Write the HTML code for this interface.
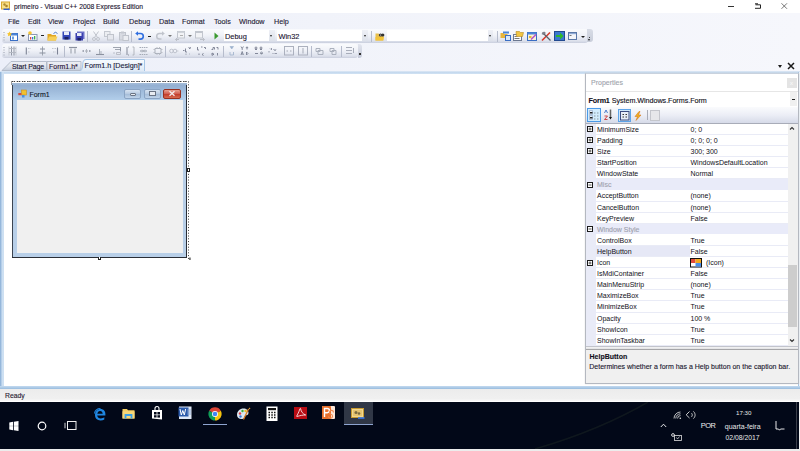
<!DOCTYPE html>
<html><head><meta charset="utf-8">
<style>
*{margin:0;padding:0;box-sizing:border-box}
html,body{width:800px;height:451px;overflow:hidden;background:#fff}
body{position:relative;font-family:"Liberation Sans",sans-serif;font-size:7px;color:#1e1a34}
.a{position:absolute}
.t{position:absolute;white-space:pre;line-height:1;-webkit-text-stroke:.12px currentColor}
.tb{position:absolute;border-radius:3px;background:linear-gradient(#fafbfd 0%,#f0f2f8 45%,#dde1ec 85%,#c9cedd 100%)}
.sep{position:absolute;width:1px;background:#b6bccc}
.dd{position:absolute;width:0;height:0;border-left:2px solid transparent;border-right:2px solid transparent;border-top:2px solid #222}
svg{position:absolute;overflow:visible}
.g{-webkit-text-stroke:0 !important}
.pr{position:absolute;left:596px;width:192px;height:11px;border-bottom:1px solid #eceef8}
</style></head><body>
<!-- title bar -->
<svg style="left:0;top:0" width="12" height="12" viewBox="0 0 12 12">
 <rect x="1.5" y="2" width="8" height="7" fill="#f8e08a" stroke="#d6a830" stroke-width="1"/>
 <circle cx="4.5" cy="4.5" r="1.2" fill="#b08a30"/><circle cx="6.5" cy="6" r="1.3" fill="#a88430"/>
 <path d="M3.5 9.3H9" stroke="#2a5ad0" stroke-width="1.3"/><path d="M8.5 8l1.5 1.3-1.5 1.3z" fill="#3a6ae0"/>
</svg>
<div class="t" style="left:14px;top:4.2px;font-size:6.75px;color:#1c1430">primeiro - Visual C++ 2008 Express Edition</div>
<div class="a" style="left:728px;top:6px;width:6px;height:1px;background:#333"></div>
<svg style="left:0;top:0" width="800" height="12"><path d="M755 3.8h3M755.5 4.8h5v3.5M755 8.3h5.5" fill="none" stroke="#222" stroke-width="1"/><path d="M781.5 3.3l5.5 5.5M787 3.3l-5.5 5.5" stroke="#555" stroke-width=".8"/></svg>


<!-- chrome background -->
<div class="a" style="left:0;top:12.5px;width:800px;height:58.5px;background:linear-gradient(90deg,#eceff9,#f1f3fa 40%,#f6f7fc)"></div>

<!-- menu -->
<div class="t" style="left:8px;top:18.2px;font-size:7.2px">File</div>
<div class="t" style="left:28px;top:18.2px;font-size:7.2px">Edit</div>
<div class="t" style="left:48px;top:18.2px;font-size:7.2px">View</div>
<div class="t" style="left:73px;top:18.2px;font-size:7.2px">Project</div>
<div class="t" style="left:103px;top:18.2px;font-size:7.2px">Build</div>
<div class="t" style="left:129px;top:18.2px;font-size:7.2px">Debug</div>
<div class="t" style="left:159px;top:18.2px;font-size:7.2px">Data</div>
<div class="t" style="left:182px;top:18.2px;font-size:7.2px">Format</div>
<div class="t" style="left:214px;top:18.2px;font-size:7.2px">Tools</div>
<div class="t" style="left:239px;top:18.2px;font-size:7.2px">Window</div>
<div class="t" style="left:274px;top:18.2px;font-size:7.2px">Help</div>

<!-- toolbar 1 -->
<div class="tb" style="left:2px;top:28.5px;width:586px;height:14px"></div>
<div class="a" style="left:586.5px;top:28.5px;width:6px;height:13.5px;border-radius:0 3px 3px 0;background:linear-gradient(#d8dce6,#c8cdd9)"></div>
<div class="a" style="left:588.8px;top:37.3px;width:1.6px;height:1px;background:#444"></div>
<div class="dd" style="left:588px;top:39px;border-width:2px 1.6px 0"></div>
<svg style="left:3px;top:31px" width="3" height="10"><path d="M1 1v1M1 3.5v1M1 6v1M1 8.5v1" stroke="#9aa0b0" stroke-width="1"/></svg>
<!-- new project -->
<svg style="left:7px;top:30.5px" width="11" height="10" viewBox="0 0 11 10">
 <rect x="3.5" y="2.5" width="7" height="7" fill="#fff" stroke="#3a6ec4"/>
 <rect x="3.5" y="2.5" width="7" height="2" fill="#4b84d8"/>
 <rect x="5" y="5.5" width="2" height="3" fill="#6b9ee0"/>
 <path d="M2.5 0.5l.8 1.6 1.7.3-1.2 1.2.3 1.7-1.6-.8-1.6.8.3-1.7-1.2-1.2 1.7-.3z" fill="#f5c431"/>
</svg>
<div class="dd" style="left:21px;top:35px"></div>
<!-- add item -->
<svg style="left:27px;top:30.5px" width="11" height="10" viewBox="0 0 11 10">
 <rect x="1.5" y="3.5" width="8.5" height="6" fill="#fdfdfd" stroke="#8a98b4"/>
 <rect x="3" y="6" width="1.3" height="2.5" fill="#e04848"/><rect x="5" y="6" width="1.3" height="2.5" fill="#3a78d8"/><rect x="7" y="5" width="1.3" height="3.5" fill="#3cb04a"/>
 <circle cx="3" cy="2" r="1.8" fill="#f5c431"/>
</svg>
<div class="a" style="left:40.5px;top:35px;width:3px;height:1px;background:#222"></div>
<!-- open -->
<svg style="left:47px;top:30.5px" width="11" height="10" viewBox="0 0 11 10">
 <path d="M0.5 3h3.5l1 1h4v5.5h-8.5z" fill="#e0a623"/>
 <path d="M2 5.5h8.5l-1.5 4h-8.5z" fill="#f7cf57"/>
 <path d="M6.5 2.5q2-2.5 4 0" fill="none" stroke="#3a6ec4" stroke-width=".9"/>
</svg>
<!-- save -->
<svg style="left:61.5px;top:31px" width="9" height="9" viewBox="0 0 9 9">
 <rect x="0.5" y="0.5" width="8" height="8" fill="#3447b8"/>
 <rect x="2" y="0.5" width="5" height="3.5" fill="#e8ecf8"/>
 <rect x="2.5" y="6" width="4" height="2.5" fill="#1a2060"/>
</svg>
<!-- save all -->
<svg style="left:74.5px;top:30.5px" width="10" height="10" viewBox="0 0 10 10">
 <rect x="2" y="0.5" width="7.5" height="7.5" fill="#6a70c8"/>
 <rect x="0.5" y="2" width="7.5" height="7.5" fill="#3a3fae"/>
 <rect x="2" y="2" width="4.5" height="3" fill="#e8ecf8"/>
 <rect x="2.5" y="7" width="3.5" height="2.5" fill="#1a2060"/>
</svg>
<div class="sep" style="left:87px;top:30.5px;height:11px"></div>
<!-- cut copy paste (disabled) -->
<svg style="left:92px;top:31px" width="8" height="10" viewBox="0 0 8 10"><path d="M1.5 0.5l4 6M6.5 0.5l-4 6" stroke="#c0c4cc" stroke-width="1"/><circle cx="2" cy="8" r="1.5" fill="none" stroke="#c0c4cc"/><circle cx="6" cy="8" r="1.5" fill="none" stroke="#c0c4cc"/></svg>
<svg style="left:104px;top:31px" width="10" height="10" viewBox="0 0 10 10"><rect x="0.5" y="0.5" width="5.5" height="5" fill="#eceef2" stroke="#c4c8d0"/><rect x="3.5" y="3.5" width="6" height="5.5" fill="#e6e8ee" stroke="#c0c4cc"/></svg>
<svg style="left:118.5px;top:31px" width="10" height="10" viewBox="0 0 10 10"><rect x="0.5" y="1.5" width="6" height="7.5" fill="#d8dbe2" stroke="#c0c4cc"/><rect x="2" y="0.5" width="3" height="2" fill="#c4c8d0"/><rect x="4" y="4.5" width="5.5" height="5" fill="#eceef2" stroke="#c0c4cc"/></svg>
<div class="sep" style="left:131px;top:30.5px;height:11px"></div>
<!-- undo -->
<svg style="left:135px;top:31px" width="9" height="9" viewBox="0 0 9 9"><path d="M2 2.5h3.5a2.8 2.8 0 0 1 0 5.6h-2" fill="none" stroke="#2f6ee0" stroke-width="1.6"/><path d="M0.2 2.5l2.8-2.3v4.6z" fill="#2f6ee0"/></svg>
<div class="a" style="left:147.5px;top:35.5px;width:3px;height:1px;background:#222"></div>
<!-- redo -->
<svg style="left:155.5px;top:31px" width="9" height="9" viewBox="0 0 9 9"><path d="M7 2.5h-3.5a2.8 2.8 0 0 0 0 5.6h2" fill="none" stroke="#c0c4cc" stroke-width="1.5"/><path d="M8.8 2.5l-2.8-2.3v4.6z" fill="#c0c4cc"/></svg>
<div class="dd" style="left:168px;top:35px;border-top-color:#777"></div>
<svg style="left:175px;top:31px" width="10" height="10" viewBox="0 0 10 10"><rect x="2.5" y="0.5" width="7" height="6.5" fill="#f2f3f6" stroke="#c2c6ce"/><rect x="2.5" y="0.5" width="7" height="1.5" fill="#d0d4da"/><path d="M5 4.5h3" stroke="#b0b0b0"/><path d="M4 8.5h-3.5M2 7l-1.5 1.5 1.5 1.5" fill="none" stroke="#bcc0c8"/></svg>
<div class="dd" style="left:188px;top:35px;border-top-color:#777"></div>
<svg style="left:194.5px;top:31px" width="10" height="10" viewBox="0 0 10 10"><rect x="0.5" y="0.5" width="7" height="6.5" fill="#f2f3f6" stroke="#c2c6ce"/><rect x="0.5" y="0.5" width="7" height="1.5" fill="#c2c6ce"/><path d="M5 8.5h4.5M8 7l1.5 1.5-1.5 1.5" fill="none" stroke="#bcc0c8"/></svg>
<svg style="left:214px;top:31.5px" width="5" height="8" viewBox="0 0 5 8"><path d="M0.5 0.5l4 3.5-4 3.5z" fill="#3b9a2f"/></svg>
<!-- combos -->
<div class="a" style="left:223.5px;top:30.2px;width:51.5px;height:10.8px;background:#fff"></div>
<div class="a" style="left:269px;top:30.2px;width:6px;height:10.8px;background:linear-gradient(#eef0f6,#dde1ea)"></div>
<div class="dd" style="left:270.2px;top:35.2px;border-width:2.2px 1.8px 0"></div>
<div class="t" style="left:225px;top:32.6px;font-size:7.4px;color:#1a1230">Debug</div>
<div class="a" style="left:277.3px;top:30.2px;width:90.7px;height:10.8px;background:#fff"></div>
<div class="a" style="left:362.3px;top:30.2px;width:5.7px;height:10.8px;background:linear-gradient(#eef0f6,#dde1ea)"></div>
<div class="dd" style="left:363.5px;top:35.2px;border-width:2.2px 1.8px 0"></div>
<div class="t" style="left:278.5px;top:32.6px;font-size:7.4px;color:#1a1230">Win32</div>
<div class="sep" style="left:371px;top:30.5px;height:11px"></div>
<svg style="left:375px;top:31.5px" width="10" height="10" viewBox="0 0 10 10"><path d="M0.5 1.5h3l1 1h4v6h-8z" fill="#e8c050"/><path d="M0.5 5h8.5l-1 3.5h-7.5z" fill="#f3c43a"/><circle cx="5.5" cy="3" r="1.6" fill="#333"/><circle cx="7.8" cy="3" r="1.6" fill="#333"/><circle cx="5.5" cy="3" r=".6" fill="#ddd"/></svg>
<div class="a" style="left:387px;top:30.2px;width:106px;height:10.8px;background:#fff"></div>
<div class="a" style="left:488px;top:30.2px;width:5px;height:10.8px;background:linear-gradient(#eef0f6,#dde1ea)"></div>
<div class="dd" style="left:488.8px;top:35.2px;border-width:2.2px 1.8px 0"></div>
<div class="sep" style="left:496.5px;top:30.5px;height:11px"></div>
<!-- right icons -->
<svg style="left:499.5px;top:31px" width="11" height="10" viewBox="0 0 11 10"><path d="M0.5 2h3l1 1h3v4h-7z" fill="#e8b53a"/><rect x="5.5" y="4.5" width="5" height="5" fill="#dbe8f8" stroke="#3a6ec4"/><rect x="3" y="0.5" width="6" height="2" fill="#4b84d8"/></svg>
<svg style="left:512.5px;top:30.5px" width="11" height="10" viewBox="0 0 11 10"><rect x="0.5" y="3.5" width="8" height="6" fill="#fbfbfd" stroke="#6c7890"/><path d="M1.5 5.5h3M1.5 7.5h5" stroke="#777"/><path d="M3 0.5h3.5l1 1h3l-1 4h-6z" fill="#f1c542" stroke="#b58a20" stroke-width=".6"/></svg>
<svg style="left:526.5px;top:30.5px" width="11" height="10" viewBox="0 0 11 10"><rect x="0.5" y="1.5" width="9" height="8" fill="#f8f2d8" stroke="#3a6ec4"/><rect x="0.5" y="1.5" width="9" height="2" fill="#4b84d8"/><path d="M4 8.5l5-5" stroke="#b455c8" stroke-width="1.6"/><rect x="2" y="5" width="2.5" height="2" fill="#e3b83a"/></svg>
<svg style="left:540.5px;top:30.5px" width="11" height="10" viewBox="0 0 11 10"><path d="M1 9.5l8-8" stroke="#d83a2a" stroke-width="1.6"/><path d="M1.5 1.5l8 8" stroke="#5a5e66" stroke-width="1.3"/><path d="M0.5 3l2.5-2.5 2 1.5-2.5 2z" fill="#7a7e88"/></svg>
<svg style="left:554px;top:30.5px" width="11" height="10" viewBox="0 0 11 10"><rect x="0.5" y="0.5" width="10" height="9" fill="#3a78d0" stroke="#224a90"/><path d="M2 4h4v-2.5l3.5 3.5-3.5 3.5v-2.5h-4z" fill="#2fb82a"/></svg>
<svg style="left:568px;top:31.5px" width="10" height="9" viewBox="0 0 10 9"><rect x="0.5" y="0.5" width="8" height="7" fill="#f4f6fa" stroke="#5a78a8"/><rect x="1" y="1" width="7" height="1.2" fill="#8eaad4"/><path d="M1.5 3.5h2" stroke="#555" stroke-width=".8"/></svg>
<div class="dd" style="left:580.5px;top:35.5px"></div>

<!-- toolbar 2 -->
<div class="tb" style="left:2px;top:43.5px;width:355.5px;height:14.5px"></div>
<div class="a" style="left:357.5px;top:43.5px;width:4px;height:14.5px;border-radius:0 3px 3px 0;background:linear-gradient(#e2e5ee,#c4c9d8)"></div>
<div class="a" style="left:359px;top:53px;width:1.5px;height:2px;background:#333"></div>
<svg style="left:3px;top:46px" width="3" height="10"><path d="M1 1v1M1 3.5v1M1 6v1M1 8.5v1" stroke="#9aa0b0" stroke-width="1"/></svg>
<svg style="left:0;top:0;width:360px;height:60px" width="360" height="60" viewBox="0 0 360 60" fill="none" stroke="#a2a8b4" stroke-width=".95">
 <path d="M9 46.5v9M16 46.5v9" stroke="#c4c8d0"/><path d="M11.5 46.5v9M14 46.5v9" stroke="#8c92a0"/><path d="M9 48.5h7M9 52.5h7" stroke="#b4b8c2"/>
 <path d="M26.3 47.5v7" stroke="#7c8294" stroke-width="1.1"/><path d="M28 48.5h3M28 52h2" stroke="#c0c4cc" stroke-dasharray="1 .5"/>
 <path d="M42.5 46.5v9" stroke="#9aa0ac"/><path d="M40 49h5M39.5 53h6" stroke="#8c92a0" stroke-width="1.1"/>
 <path d="M57.5 47.5v7" stroke="#7c8294" stroke-width="1.1"/><path d="M52 48.5h4M53 52h3" stroke="#c0c4cc" stroke-dasharray="1 .5"/>
 <path d="M69 47.5h8" stroke="#8c92a0" stroke-width="1.2"/><path d="M71 48.5v5M75 48.5v5" stroke="#a8aeb8" stroke-width="1.3"/>
 <path d="M82.5 51h1.5M85.5 51h2M89 51h1.5" stroke="#8c92a0" stroke-width="1.4"/><path d="M86.5 49v4" stroke="#b0b4bc"/>
 <path d="M96 54.5h8" stroke="#8c92a0" stroke-width="1.1"/><path d="M99.5 49v5M101 51v3" stroke="#a8aeb8"/>
 <path d="M113 47.5h8M115 49.5h6" stroke="#9aa0ac"/><path d="M120.5 47.5v4" stroke="#8c92a0"/><path d="M116.5 52.5h4v2h-4z" stroke="#b8bcc4"/><path d="M113.5 53h1" stroke="#8c92a0"/>
 <path d="M127 47v8M128 47h1M128 55h1" stroke="#8c92a0" stroke-width="1.1"/><path d="M132.5 47h1.5v8h-1.5" stroke="#b0b4bc"/>
 <path d="M139.5 47.5h8M139.5 54.5h8" stroke="#a0a6b2" stroke-dasharray="1.5 .7"/><path d="M140 51h7" stroke="#8c92a0"/><path d="M142 49.5l1.5 1.5 1.5-1.5M142 52.5l1.5-1.5 1.5 1.5" stroke="#a8aeb8" stroke-width=".8"/>
 <path d="M155 48.5h6v5h-6z" stroke="#a8aeb8"/><path d="M153.5 49.5h1.5M153.5 52.5h1.5M161 49.5h1.5M161 52.5h1.5M157 47v1.5M159.5 47v1.5M157 53.5v1.5M159.5 53.5v1.5" stroke="#b8bcc4"/>
 <circle cx="171.5" cy="51" r="1.8" stroke="#bcc0ca"/><circle cx="175" cy="51" r="1.8" stroke="#bcc0ca"/><path d="M177 51h1.5" stroke="#c8ccd4"/>
 <path d="M183 50.5h1.5M185.5 48.5v3.5h1.5M188.5 47.5l1.5 1.5M189.5 47.5h1v1" stroke="#7c8294"/><path d="M186 53.5v1.5M189 54h.8" stroke="#a0a6b2"/>
 <path d="M197.5 47v3h1.5M201 47h1.5M204 47.5h1.5v1.5M199 53.5v1.5M203.5 53.5l-1.5 1 1.5 1" stroke="#7c8294"/>
 <path d="M211.5 49.5h1.5v-2h1.5v2M216.5 47.5h1.5v2M212 53l2 1.2-2 1.2zM217.5 53v2.5" stroke="#7c8294"/>
 <path d="M230 46.5h3.5l-1.75 2.5z" fill="#9ab0cc" stroke="#9ab0cc" stroke-width=".6"/><path d="M230 52v3h3.5v-3" stroke="#a8b8d0"/>
 <path d="M241 46.5l1.2 2 1.2-2M242.2 48.5v1.5M247 46.5v3M245.8 47.7h2.4M241 55l1.2-3.5 1.2 3.5M241.5 54h1.4M246.5 52v3l1.5-1.5z" stroke="#7c8294" stroke-width=".9"/>
 <circle cx="256" cy="48" r="1" stroke="#7c8294"/><circle cx="261" cy="48" r="1" stroke="#7c8294"/><path d="M255 49.5h2M260 49.5h2M255 53.5h3M260.5 53.5h2" stroke="#7c8294"/><circle cx="261.5" cy="53" r="1" stroke="#8c92a0"/>
 <path d="M269 51v1.5M270 48.5l1 1M271.5 48v2M273.5 49.5h.5l.5 1 .5-1 .5 1 .5-1M272.5 53.5h1M274.5 53.5h2.5" stroke="#8a90a0" stroke-width=".9"/>
 <rect x="284.5" y="46.5" width="9" height="8.5" stroke="#a8aebb"/><path d="M286.5 51h1.5M290 51h1.5" stroke-width="1.2"/>
 <rect x="298.5" y="46.5" width="9" height="8.5" stroke="#a8aebb"/><path d="M303 48v5.5" />
 <path d="M316 48.5h4v3h-4zM318 50.5h5v4h-5z" stroke="#a8aebb"/>
 <path d="M330 48.5h4v3h-4zM332 50.5h4v4h-4z" stroke="#a8aebb"/>
 <path d="M346 47.5h6M346 50.5h6M346 53.5h6M353.5 48v5" stroke="#a4aab6"/>
</svg>
<div class="sep" style="left:64px;top:45.5px;height:11px"></div>
<div class="sep" style="left:165px;top:45.5px;height:11px"></div>
<div class="sep" style="left:223px;top:45.5px;height:11px"></div>
<div class="sep" style="left:311px;top:45.5px;height:11px"></div>
<div class="sep" style="left:340.5px;top:45.5px;height:11px"></div>
<!-- tabs -->
<svg style="left:0;top:58px" width="150" height="14" viewBox="0 0 150 14">
 <defs>
  <linearGradient id="tg" x1="0" y1="0" x2="0" y2="1"><stop offset="0" stop-color="#eef0f5"/><stop offset=".5" stop-color="#e2e6ee"/><stop offset="1" stop-color="#c6cedc"/></linearGradient>
  <linearGradient id="ta" x1="0" y1="0" x2="0" y2="1"><stop offset="0" stop-color="#f8fbfe"/><stop offset="1" stop-color="#dde9f6"/></linearGradient>
 </defs>
 <path d="M2 12.5L11 3.5H46.5V12.5z" fill="url(#tg)" stroke="#aab2c2" stroke-width=".8"/>
 <path d="M47 12.5V3.5H81V12.5z" fill="url(#tg)" stroke="#aab2c2" stroke-width=".8"/>
 <path d="M80 13.5Q82 12 82.5 9L83 4Q83.5 1.5 86 1.5H144.5V13.5z" fill="url(#ta)" stroke="#a6c6e6" stroke-width="1"/>
</svg>
<div class="t" style="left:12px;top:62.8px;font-size:7px;letter-spacing:-.1px;color:#1a1634">Start Page</div>
<div class="t" style="left:49px;top:62.8px;font-size:7px;color:#2a1438">Form1.h*</div>
<div class="t" style="left:84.5px;top:62.4px;font-size:7.2px;color:#1a1a3a">Form1.h [Design]*</div>
<div class="a" style="left:0;top:70.5px;width:800px;height:3px;background:linear-gradient(#e6eef8,#c4d8ee 35%,#c8dcf0 80%,#eaf2fa)"></div>

<!-- doc area -->
<div class="a" style="left:0;top:72px;width:4px;height:315px;background:linear-gradient(90deg,#86acd4,#b8d0ea 40%,#d8e8f6 75%,#c4d8ee)"></div>
<div class="a" style="left:797.5px;top:72px;width:1.5px;height:315px;background:#a4c2e2"></div><div class="a" style="left:799px;top:72px;width:1px;height:315px;background:#eef4fa"></div>
<div class="a" style="left:0;top:386px;width:800px;height:2.7px;background:linear-gradient(#c4daf0,#98bcde)"></div>

<!-- form designer -->
<svg style="left:0;top:0" width="200" height="262"><path d="M11.5 81.5H188.5" fill="none" stroke="#3c3c3c" stroke-width="1" stroke-dasharray="1.5 .6 1.5 1.6"/><path d="M188.5 81.5V259" fill="none" stroke="#3c3c3c" stroke-width="1" stroke-dasharray="1 1.8"/><path d="M11.5 82v3" stroke="#555" stroke-width=".6"/><rect x="189" y="257.5" width="1.8" height="2.5" fill="#777"/></svg>
<div class="a" style="left:12px;top:83.5px;width:174.5px;height:173.5px;background:#b8cfe8"></div>
<div class="a" style="left:12px;top:83.2px;width:174.5px;height:16.8px;background:linear-gradient(#a4bcd8,#94b0d2 15%,#b2ceea)"></div>
<div class="a" style="left:11.5px;top:85px;width:1.5px;height:172.5px;background:#3c4450"></div>
<div class="a" style="left:11.5px;top:256.6px;width:175.8px;height:1.2px;background:#2a2e36"></div>
<div class="a" style="left:186px;top:85px;width:1.3px;height:172.7px;background:#2a2e36"></div>
<div class="a" style="left:17px;top:100px;width:166px;height:152.5px;background:#f0f0f0"></div>
<!-- handles -->
<div class="a" style="left:186.5px;top:168px;width:3px;height:4px;background:#fff;border:1px solid #222"></div>
<div class="a" style="left:97.5px;top:256.5px;width:3px;height:3px;background:#fff;border:1px solid #222;border-top:none"></div>
<!-- form icon -->
<svg style="left:18px;top:89px" width="10" height="9" viewBox="0 0 10 9">
 <rect x="3.5" y="1" width="5" height="5" fill="#f0c030" stroke="#c89020" stroke-width=".6"/>
 <rect x="0.3" y="4" width="3" height="2.2" fill="#d84a40"/>
 <rect x="4" y="6" width="2.5" height="2.5" fill="#4a90e0"/>
</svg>
<div class="t" style="left:29.4px;top:91px;font-size:7px;color:#121826">Form1</div>
<!-- caption buttons -->
<div class="a" style="left:124px;top:88.5px;width:17px;height:10px;border-radius:2px;border:1px solid #8aa4c4;background:linear-gradient(#d8e4f2,#b4c8e0 50%,#a4bcd8 51%,#c0d4ea)"></div>
<div class="a" style="left:129.5px;top:93px;width:6px;height:2.5px;background:#e8ecf2;border:1px solid #6a7484;border-radius:1px"></div>
<div class="a" style="left:143.5px;top:88.5px;width:17px;height:10px;border-radius:2px;border:1px solid #8aa4c4;background:linear-gradient(#d8e4f2,#b4c8e0 50%,#a4bcd8 51%,#c0d4ea)"></div>
<div class="a" style="left:148.5px;top:91px;width:7px;height:5px;background:#e8ecf2;border:1px solid #6a7484;border-top-width:1.5px"></div>
<div class="a" style="left:163px;top:88.5px;width:18px;height:10px;border-radius:2px;border:1px solid #983020;background:linear-gradient(#e8a090,#d0584a 50%,#c03a2a 51%,#d86a50)"></div>
<svg style="left:168px;top:90px" width="8" height="7" viewBox="0 0 8 7"><path d="M1.5 1.2l5 4.6M6.5 1.2l-5 4.6" stroke="#f4eeee" stroke-width="1.3"/></svg>
<!-- properties window -->
<div class="a" style="left:778px;top:64.5px;width:0;height:0;border-left:2.7px solid transparent;border-right:2.7px solid transparent;border-top:3px solid #1a1a1a"></div>
<svg style="left:787px;top:61.5px" width="8" height="8" viewBox="0 0 8 8"><path d="M1 1l6 6M7 1l-6 6" stroke="#1a1a1a" stroke-width="1.5"/></svg>
<div class="a" style="left:584.5px;top:73px;width:214px;height:311px;background:#f0f0f0;border:1px solid #b4b8c0;border-top-color:#c9d2de;box-shadow:0 0 1px #ccc"></div>
<div class="a" style="left:585.5px;top:74px;width:212px;height:17px;background:#fff"></div>
<div class="t" style="left:591px;top:79px;font-size:7px;color:#a0a4ac">Properties</div>
<div class="a" style="left:787px;top:78px;width:9.5px;height:9.5px;background:#e4e4e4"></div>
<div class="t" style="left:790px;top:80px;font-size:6px;color:#f8f8f8">x</div>
<div class="a" style="left:585.5px;top:91px;width:212px;height:15.5px;background:#fff;border-top:1px solid #e6e6e6"></div>
<div class="a" style="left:789.5px;top:92px;width:7.5px;height:14px;background:#f0f0f0"></div>
<div class="a" style="left:791.5px;top:98.5px;width:3.5px;height:1.2px;background:#222"></div>
<div class="t" style="left:588.5px;top:96.5px;font-size:7.2px;color:#121020"><b style="letter-spacing:-.15px">Form1</b> <span style="letter-spacing:-.05px">System.Windows.Forms.Form</span></div>
<div class="a" style="left:585.5px;top:106.5px;width:212px;height:16.5px;background:linear-gradient(#fafbfd,#eceef6 50%,#d6dae8)"></div>
<div class="a" style="left:585.5px;top:122.5px;width:212px;height:1.3px;background:#a8acb8"></div>
<div class="a" style="left:587px;top:108.3px;width:14px;height:13.7px;background:#d2ecfc;border:1px solid #4a9ae8"></div>
<svg style="left:589px;top:110px" width="11" height="11" viewBox="0 0 11 11"><path d="M.5 .5h3v4h-3zM.5 5.5h3v4h-3z" fill="#e8f0f8" stroke="#8aa0c0" stroke-width=".6"/><rect x="1" y="2" width="2.5" height="1.5" fill="#222"/><rect x="1" y="7" width="2.5" height="1.5" fill="#222"/><path d="M5 3h1.5M8 3h1.5M5 6h1.5M8 6h1.5M5 9h1.5M8 9h1.5" stroke="#8a98a0" stroke-width="1.1"/></svg>
<svg style="left:602.5px;top:109px" width="10" height="12" viewBox="0 0 10 12"><path d="M1.5 4l1.5-3 1.5 3" fill="none" stroke="#3a6ec4" stroke-width=".9"/><path d="M1.5 7h3l-3 3.5h3" fill="none" stroke="#c83838" stroke-width=".9"/><path d="M7.5 .5v8" stroke="#666" stroke-width="1.5"/><path d="M6 8l1.5 2.5 1.5-2.5z" fill="#111"/></svg>
<div class="a" style="left:618px;top:108.5px;width:13.3px;height:13.3px;background:#cde6fb;border:1px solid #5ea4e8"></div>
<svg style="left:620px;top:110.5px" width="10" height="10" viewBox="0 0 10 10"><rect x="0.5" y="0.5" width="8.5" height="8.5" fill="#e6ecf8" stroke="#3a4a80"/><path d="M2.5 3.5h1.5M5.5 3.5h1.5M2.5 6h1.5M5.5 6h1.5" stroke="#333" stroke-width="1.1"/></svg>
<svg style="left:634px;top:110.5px" width="8" height="10" viewBox="0 0 8 10"><path d="M5 0.5l-4 5h2.5l-1.5 4 5-5.5h-2.5l1.5-3.5z" fill="#f0b020" stroke="#d06a10" stroke-width=".5"/></svg>
<div class="sep" style="left:646.5px;top:110px;height:10px;background:#a8acb8"></div>
<div class="a" style="left:650px;top:109.5px;width:10px;height:11px;background:#e6e7ea;border:1px solid #c4c6cc"></div>
<div class="a" style="left:585.5px;top:123.8px;width:203px;height:222.2px;background:#fff"></div>
<div class="a" style="left:585.5px;top:123.8px;width:10.5px;height:222.2px;background:#e9ebf7"></div>
<div class="a" style="left:596px;top:133.9px;width:192.5px;height:1px;background:#e9ebf6"></div>
<div class="t g" style="left:597px;top:125.8px;font-size:7px;color:#101020">MinimumSize</div>
<div class="t g" style="left:690.5px;top:125.8px;font-size:7px;color:#101020">0; 0</div>
<svg style="left:587px;top:126px" width="7" height="7" viewBox="0 0 7 7"><rect x=".5" y=".5" width="5" height="5" fill="#fff" stroke="#1a1a1a" stroke-width="1"/><path d="M1.5 3h3" stroke="#444" stroke-width=".9"/><path d="M3 1.5v3" stroke="#444" stroke-width=".9"/></svg>
<div class="a" style="left:596px;top:145.0px;width:192.5px;height:1px;background:#e9ebf6"></div>
<div class="t g" style="left:597px;top:136.9px;font-size:7px;color:#101020">Padding</div>
<div class="t g" style="left:690.5px;top:136.9px;font-size:7px;color:#101020">0; 0; 0; 0</div>
<svg style="left:587px;top:137px" width="7" height="7" viewBox="0 0 7 7"><rect x=".5" y=".5" width="5" height="5" fill="#fff" stroke="#1a1a1a" stroke-width="1"/><path d="M1.5 3h3" stroke="#444" stroke-width=".9"/><path d="M3 1.5v3" stroke="#444" stroke-width=".9"/></svg>
<div class="a" style="left:596px;top:156.1px;width:192.5px;height:1px;background:#e9ebf6"></div>
<div class="t g" style="left:597px;top:148.0px;font-size:7px;color:#101020">Size</div>
<div class="t g" style="left:690.5px;top:148.0px;font-size:7px;color:#101020">300; 300</div>
<svg style="left:587px;top:148px" width="7" height="7" viewBox="0 0 7 7"><rect x=".5" y=".5" width="5" height="5" fill="#fff" stroke="#1a1a1a" stroke-width="1"/><path d="M1.5 3h3" stroke="#444" stroke-width=".9"/><path d="M3 1.5v3" stroke="#444" stroke-width=".9"/></svg>
<div class="a" style="left:596px;top:167.2px;width:192.5px;height:1px;background:#e9ebf6"></div>
<div class="t g" style="left:597px;top:159.1px;font-size:7px;color:#101020">StartPosition</div>
<div class="t g" style="left:690.5px;top:159.1px;font-size:7px;color:#101020">WindowsDefaultLocation</div>
<div class="a" style="left:596px;top:178.3px;width:192.5px;height:1px;background:#e9ebf6"></div>
<div class="t g" style="left:597px;top:170.2px;font-size:7px;color:#101020">WindowState</div>
<div class="t g" style="left:690.5px;top:170.2px;font-size:7px;color:#101020">Normal</div>
<div class="a" style="left:585.5px;top:179.3px;width:203px;height:10.5px;background:#e9ebf9"></div>
<div class="t" style="left:597px;top:181.3px;font-size:7px;color:#a0a2ae">Misc</div>
<svg style="left:587px;top:182px" width="7" height="7" viewBox="0 0 7 7"><rect x=".5" y=".5" width="5" height="5" fill="#fff" stroke="#1a1a1a" stroke-width="1"/><path d="M1.5 3h3" stroke="#444" stroke-width=".9"/></svg>
<div class="a" style="left:596px;top:200.5px;width:192.5px;height:1px;background:#e9ebf6"></div>
<div class="t g" style="left:597px;top:192.4px;font-size:7px;color:#101020">AcceptButton</div>
<div class="t g" style="left:690.5px;top:192.4px;font-size:7px;color:#101020">(none)</div>
<div class="a" style="left:596px;top:211.6px;width:192.5px;height:1px;background:#e9ebf6"></div>
<div class="t g" style="left:597px;top:203.5px;font-size:7px;color:#101020">CancelButton</div>
<div class="t g" style="left:690.5px;top:203.5px;font-size:7px;color:#101020">(none)</div>
<div class="a" style="left:596px;top:222.7px;width:192.5px;height:1px;background:#e9ebf6"></div>
<div class="t g" style="left:597px;top:214.6px;font-size:7px;color:#101020">KeyPreview</div>
<div class="t g" style="left:690.5px;top:214.6px;font-size:7px;color:#101020">False</div>
<div class="a" style="left:585.5px;top:223.7px;width:203px;height:10.5px;background:#e9ebf9"></div>
<div class="t" style="left:597px;top:225.7px;font-size:7px;color:#a0a2ae">Window Style</div>
<svg style="left:587px;top:226px" width="7" height="7" viewBox="0 0 7 7"><rect x=".5" y=".5" width="5" height="5" fill="#fff" stroke="#1a1a1a" stroke-width="1"/><path d="M1.5 3h3" stroke="#444" stroke-width=".9"/></svg>
<div class="a" style="left:596px;top:244.9px;width:192.5px;height:1px;background:#e9ebf6"></div>
<div class="t g" style="left:597px;top:236.8px;font-size:7px;color:#101020">ControlBox</div>
<div class="t g" style="left:690.5px;top:236.8px;font-size:7px;color:#101020">True</div>
<div class="a" style="left:596px;top:256.0px;width:192.5px;height:1px;background:#e9ebf6"></div>
<div class="a" style="left:596px;top:245.9px;width:94px;height:10.1px;background:#e6e8f6"></div>
<div class="t g" style="left:597px;top:247.9px;font-size:7px;color:#101020">HelpButton</div>
<div class="t g" style="left:690.5px;top:247.9px;font-size:7px;color:#101020">False</div>
<div class="a" style="left:596px;top:267.1px;width:192.5px;height:1px;background:#e9ebf6"></div>
<div class="t g" style="left:597px;top:259.0px;font-size:7px;color:#101020">Icon</div>
<svg style="left:690px;top:257.8px" width="12" height="10" viewBox="0 0 12 10"><rect x="0.5" y="0.5" width="11" height="8.5" fill="#fff" stroke="#111" stroke-width="1"/><rect x="1" y="1" width="4.5" height="4" fill="#e04a3a"/><rect x="5.5" y="1" width="5.5" height="4" fill="#f2a820"/><rect x="5.5" y="5" width="5.5" height="3.5" fill="#4a8ee8"/></svg>
<div class="t g" style="left:706px;top:259.0px;font-size:7px;color:#101020">(Icon)</div>
<svg style="left:587px;top:260px" width="7" height="7" viewBox="0 0 7 7"><rect x=".5" y=".5" width="5" height="5" fill="#fff" stroke="#1a1a1a" stroke-width="1"/><path d="M1.5 3h3" stroke="#444" stroke-width=".9"/><path d="M3 1.5v3" stroke="#444" stroke-width=".9"/></svg>
<div class="a" style="left:596px;top:278.2px;width:192.5px;height:1px;background:#e9ebf6"></div>
<div class="t g" style="left:597px;top:270.1px;font-size:7px;color:#101020">IsMdiContainer</div>
<div class="t g" style="left:690.5px;top:270.1px;font-size:7px;color:#101020">False</div>
<div class="a" style="left:596px;top:289.3px;width:192.5px;height:1px;background:#e9ebf6"></div>
<div class="t g" style="left:597px;top:281.2px;font-size:7px;color:#101020">MainMenuStrip</div>
<div class="t g" style="left:690.5px;top:281.2px;font-size:7px;color:#101020">(none)</div>
<div class="a" style="left:596px;top:300.4px;width:192.5px;height:1px;background:#e9ebf6"></div>
<div class="t g" style="left:597px;top:292.3px;font-size:7px;color:#101020">MaximizeBox</div>
<div class="t g" style="left:690.5px;top:292.3px;font-size:7px;color:#101020">True</div>
<div class="a" style="left:596px;top:311.5px;width:192.5px;height:1px;background:#e9ebf6"></div>
<div class="t g" style="left:597px;top:303.4px;font-size:7px;color:#101020">MinimizeBox</div>
<div class="t g" style="left:690.5px;top:303.4px;font-size:7px;color:#101020">True</div>
<div class="a" style="left:596px;top:322.6px;width:192.5px;height:1px;background:#e9ebf6"></div>
<div class="t g" style="left:597px;top:314.5px;font-size:7px;color:#101020">Opacity</div>
<div class="t g" style="left:690.5px;top:314.5px;font-size:7px;color:#101020">100 %</div>
<div class="a" style="left:596px;top:333.7px;width:192.5px;height:1px;background:#e9ebf6"></div>
<div class="t g" style="left:597px;top:325.6px;font-size:7px;color:#101020">ShowIcon</div>
<div class="t g" style="left:690.5px;top:325.6px;font-size:7px;color:#101020">True</div>
<div class="a" style="left:596px;top:344.8px;width:192.5px;height:1px;background:#e9ebf6"></div>
<div class="t g" style="left:597px;top:336.7px;font-size:7px;color:#101020">ShowInTaskbar</div>
<div class="t g" style="left:690.5px;top:336.7px;font-size:7px;color:#101020">True</div>
<div class="a" style="left:788px;top:123.8px;width:9px;height:222.2px;background:#f0f0f0"></div>
<div class="a" style="left:788px;top:264.5px;width:8.5px;height:62px;background:#cdcdcd"></div>
<svg style="left:789px;top:126px" width="6" height="5" viewBox="0 0 6 5"><path d="M1 3.5l2-2 2 2" fill="none" stroke="#333" stroke-width="1.1"/></svg>
<svg style="left:789px;top:338px" width="6" height="5" viewBox="0 0 6 5"><path d="M1 1.5l2 2 2-2" fill="none" stroke="#333" stroke-width="1.1"/></svg>
<div class="a" style="left:585.5px;top:345.8px;width:212px;height:1.7px;background:#c2c4cc"></div>
<div class="a" style="left:585.5px;top:347.5px;width:212px;height:1.5px;background:#e6e6e8"></div>
<div class="a" style="left:585.5px;top:349px;width:212px;height:1.1px;background:#a6a6a8"></div>
<div class="t" style="left:589.5px;top:352.5px;font-size:7px;font-weight:bold;color:#121020">HelpButton</div>
<div class="t" style="left:589.3px;top:362.5px;font-size:7px;color:#1c1830">Determines whether a form has a Help button on the caption bar.</div>
<!-- status -->
<div class="a" style="left:0;top:388.7px;width:800px;height:12.8px;background:linear-gradient(#ececec,#f0f0f0 80%,#f8f8f8)"></div>
<div class="t" style="left:5px;top:392.5px;font-size:6.8px;color:#2a1a30">Ready</div>

<!-- taskbar -->
<div class="a" style="left:0;top:401.5px;width:800px;height:47px;background:#020818"></div>
<div class="a" style="left:0;top:448.5px;width:800px;height:2.5px;background:#ececec"></div>
<svg style="left:0;top:401.5px;overflow:hidden" width="800" height="47"><path d="M535 47Q600 28 648 0" fill="none" stroke="#5a6a40" stroke-width="1.5" opacity=".16"/></svg>
<div class="a" style="left:795.5px;top:401.5px;width:1px;height:47px;background:#3a3e4a"></div>
<div class="a" style="left:799px;top:401.5px;width:1px;height:47px;background:#f0f0f0"></div>
<!-- start -->
<svg style="left:9px;top:421px" width="10" height="10" viewBox="0 0 10 10"><path d="M0.3 1.4l3.8-.6v8.4l-3.8-.6z" fill="#fff"/><path d="M4.9 .7l4.6-.7v10l-4.6-.7z" fill="#fff"/><path d="M0 5h10" stroke="#020818" stroke-width=".35" opacity=".6"/></svg>
<svg style="left:37px;top:420.5px" width="10" height="10" viewBox="0 0 10 10"><circle cx="5" cy="5" r="3.8" fill="none" stroke="#fff" stroke-width="1.2"/></svg>
<svg style="left:63px;top:420px" width="14" height="11" viewBox="0 0 14 11"><rect x="4.5" y="1.5" width="8.5" height="8" fill="none" stroke="#f0f0f0" stroke-width="1"/><path d="M2 2.8v5.5" stroke="#e8e8e8" stroke-width=".9"/></svg>
<!-- edge -->
<svg style="left:94px;top:407.5px" width="12" height="12" viewBox="0 0 12 12"><path d="M10.5 7.5H3.2c.2 2 1.8 3 3.6 3 1.4 0 2.6-.5 3.5-1.2v2.2c-1 .6-2.3.9-3.8.9C3.2 12.4 1 10.3 1 7c0-3.4 2.4-6 5.6-6 3 0 4.8 2.2 4.8 5.2v1.3zM3.3 5.7h5.4C8.6 4.2 7.6 3 6 3 4.6 3 3.6 4.2 3.3 5.7z" fill="#1f86e0"/><path d="M0.5 5.5C1 2.5 3.5.5 6.5.5" fill="none" stroke="#1f86e0" stroke-width="1.2"/></svg>
<!-- explorer -->
<svg style="left:122px;top:408px" width="13" height="11" viewBox="0 0 13 11"><path d="M0.5 1h4.5l1 1.3h6.5v8.2h-12z" fill="#f6cf62"/><rect x="0.5" y="3.3" width="12" height="7.2" fill="#f8d878"/><path d="M3.5 10.5v-3.5h6v3.5" fill="none" stroke="#3aa0e8" stroke-width="1.8"/></svg>
<!-- store -->
<svg style="left:151px;top:406px" width="12" height="14" viewBox="0 0 12 14"><path d="M4 4V2.5a2 2 0 0 1 4 0V4" fill="none" stroke="#fff" stroke-width="1.1"/><path d="M1 4h10v9.5l-10-1z" fill="#fff"/><rect x="3" y="6" width="2.6" height="2.5" fill="#020818"/><rect x="6.4" y="6" width="2.6" height="2.5" fill="#020818"/><rect x="3" y="9.2" width="2.6" height="2.3" fill="#020818"/><rect x="6.4" y="9.2" width="2.6" height="2.4" fill="#020818"/></svg>
<!-- word -->
<svg style="left:178px;top:406px" width="14" height="13" viewBox="0 0 14 13"><rect x="1" y="0.5" width="12.5" height="12.5" fill="#dfe8f6"/><rect x="0.5" y="1.5" width="10" height="9" fill="#2b5aab"/><path d="M2 3l1.3 6 1.5-4.5 1.5 4.5 1.3-6" fill="none" stroke="#fff" stroke-width="1"/><path d="M9 4h4M9 6h4M9 8h4" stroke="#8aa4d0" stroke-width=".8"/></svg>
<!-- chrome -->
<svg style="left:208px;top:407px" width="14" height="14" viewBox="0 0 14 14">
 <path d="M7 7L1.2 3.8A6.6 6.6 0 0 1 12.8 3.8z" fill="#db4437"/>
 <path d="M7 7L12.8 3.8A6.6 6.6 0 0 1 7 13.6z" fill="#f4c20d"/>
 <path d="M7 7L7 13.6A6.6 6.6 0 0 1 1.2 3.8z" fill="#0f9d58"/>
 <circle cx="7" cy="7" r="3" fill="#fff"/><circle cx="7" cy="7" r="2.3" fill="#4285f4"/>
</svg>
<div class="a" style="left:203px;top:424px;width:23.5px;height:1.2px;background:#8ea4d0"></div>
<!-- paint -->
<svg style="left:236px;top:407px" width="15" height="14" viewBox="0 0 15 14"><path d="M1 8c0-4 3-6.5 6.5-6.5 3 0 5 2 5 4.5 0 2-2 2.2-3 2.5s-.8 2-2 3C5 13 1 11.5 1 8z" fill="#dce6f0"/><circle cx="4" cy="6.5" r="1.2" fill="#e04040"/><circle cx="6.5" cy="4" r="1.2" fill="#40b040"/><circle cx="9.5" cy="4" r="1.2" fill="#f0c020"/><circle cx="4.5" cy="9.5" r="1.2" fill="#3a78d8"/><path d="M7.5 12.5L12.5 2" stroke="#d87a20" stroke-width="1.3"/><path d="M12 3l1.5-2.5 1 1z" fill="#f0a030"/></svg>
<!-- calc -->
<svg style="left:266px;top:406px" width="12" height="15" viewBox="0 0 12 15"><rect x="0.5" y="0.5" width="11" height="14.5" fill="#fff"/><rect x="2" y="2" width="8" height="2.2" fill="#111"/><path d="M2.5 6.5h1.5M5.3 6.5h1.5M8 6.5h1.5M2.5 9h1.5M5.3 9h1.5M8 9h1.5M2.5 11.5h1.5M5.3 11.5h1.5M8 11.5h1.5" stroke="#111" stroke-width="1.3"/></svg>
<!-- acrobat -->
<svg style="left:294px;top:406.5px" width="13" height="12" viewBox="0 0 13 12"><rect x="0" y="0" width="13" height="12" fill="#b80c14"/><path d="M2.5 9.5c1-2 2.5-4.5 3.3-7.5.3-.8.8-.8.9 0 .4 2.5 2 5 5 6-3 0-5.5.5-8.7 1.5" fill="none" stroke="#fff" stroke-width=".8"/></svg>
<!-- powerpoint -->
<svg style="left:322px;top:406px" width="13" height="13" viewBox="0 0 13 13"><rect x="0" y="0" width="13" height="13" rx="1" fill="#fde6d8"/><rect x="0" y="0" width="9" height="13" rx="1" fill="#e8702c"/><path d="M2.5 11V2.5h2.8a2.1 2.1 0 0 1 0 4.2H2.5" fill="none" stroke="#fff" stroke-width="1.4"/><path d="M11.5 6.5a2 2 0 1 0-2.5 1.8 2 2 0 1 1-2.5 2" fill="none" stroke="#f08a50" stroke-width="1.1"/></svg>
<!-- VS active -->
<div class="a" style="left:344px;top:401.5px;width:28.5px;height:22.5px;background:#303746"></div>
<div class="a" style="left:344px;top:423.5px;width:28.5px;height:1.3px;background:#8ea4d0"></div>
<svg style="left:351px;top:408px" width="14" height="11" viewBox="0 0 14 11"><rect x="0.5" y="0.5" width="12" height="9" fill="#f2d890" stroke="#c89a30"/><rect x="2" y="2" width="9" height="6" fill="#e6c470"/><circle cx="5" cy="4.5" r="1.5" fill="#7a6a40"/><circle cx="8" cy="5.5" r="1.3" fill="#7a6a40"/><path d="M7 10h6.5" stroke="#3a78e8" stroke-width="1.6"/></svg>
<!-- tray -->
<svg style="left:673px;top:410.5px" width="9" height="8" viewBox="0 0 9 8"><path d="M1 7.5A6.5 6.5 0 0 1 7.5 1" fill="none" stroke="#e8e8e8" stroke-width=".8"/><path d="M2.8 7.5A4.7 4.7 0 0 1 7.5 2.8" fill="none" stroke="#e8e8e8" stroke-width=".8"/><path d="M4.6 7.5A2.9 2.9 0 0 1 7.5 4.6" fill="none" stroke="#e8e8e8" stroke-width=".8"/><circle cx="7.3" cy="7.3" r=".8" fill="#e8e8e8"/></svg>
<svg style="left:684.5px;top:409.5px" width="11" height="10" viewBox="0 0 11 10"><path d="M4.5 1.5L1.2 4.8 4.5 8" fill="none" stroke="#e8e8e8" stroke-width=".9"/><path d="M6.3 3a2.5 2.5 0 0 1 0 4M8.3 1.3a4.6 4.6 0 0 1 0 7.4" fill="none" stroke="#d8d8d8" stroke-width=".8"/></svg>
<svg style="left:660px;top:423px" width="7" height="5" viewBox="0 0 7 5"><path d="M0.8 4L3.5 1.2 6.2 4" fill="none" stroke="#fff" stroke-width=".9"/></svg>
<svg style="left:671px;top:432.5px" width="11" height="8" viewBox="0 0 11 8"><rect x="3.5" y="2.5" width="7" height="5" fill="none" stroke="#e0e0e0" stroke-width=".8"/><circle cx="2" cy="2" r="1.4" fill="none" stroke="#e8e8e8" stroke-width=".9"/><path d="M5.5 4.5l1 1.5 2-2.5" fill="none" stroke="#e0e0e0" stroke-width=".7"/></svg>
<div class="t g" style="left:700.8px;top:422.3px;font-size:7.4px;letter-spacing:-.45px;color:#eee">POR</div>
<div class="t g" style="left:736px;top:409.6px;font-size:6.2px;color:#e8e8e8">17:30</div>
<div class="t g" style="left:724.8px;top:422.8px;font-size:7px;color:#e8e8e8">quarta-feira</div>
<div class="t g" style="left:725.6px;top:435.3px;font-size:6.8px;color:#e8e8e8">02/08/2017</div>
<svg style="left:775px;top:419.5px" width="11" height="11" viewBox="0 0 11 11"><path d="M1 1v8h2.5M3.5 9l1 1.2 1-1.2h4" fill="none" stroke="#fff" stroke-width=".9"/></svg>
</body></html>
